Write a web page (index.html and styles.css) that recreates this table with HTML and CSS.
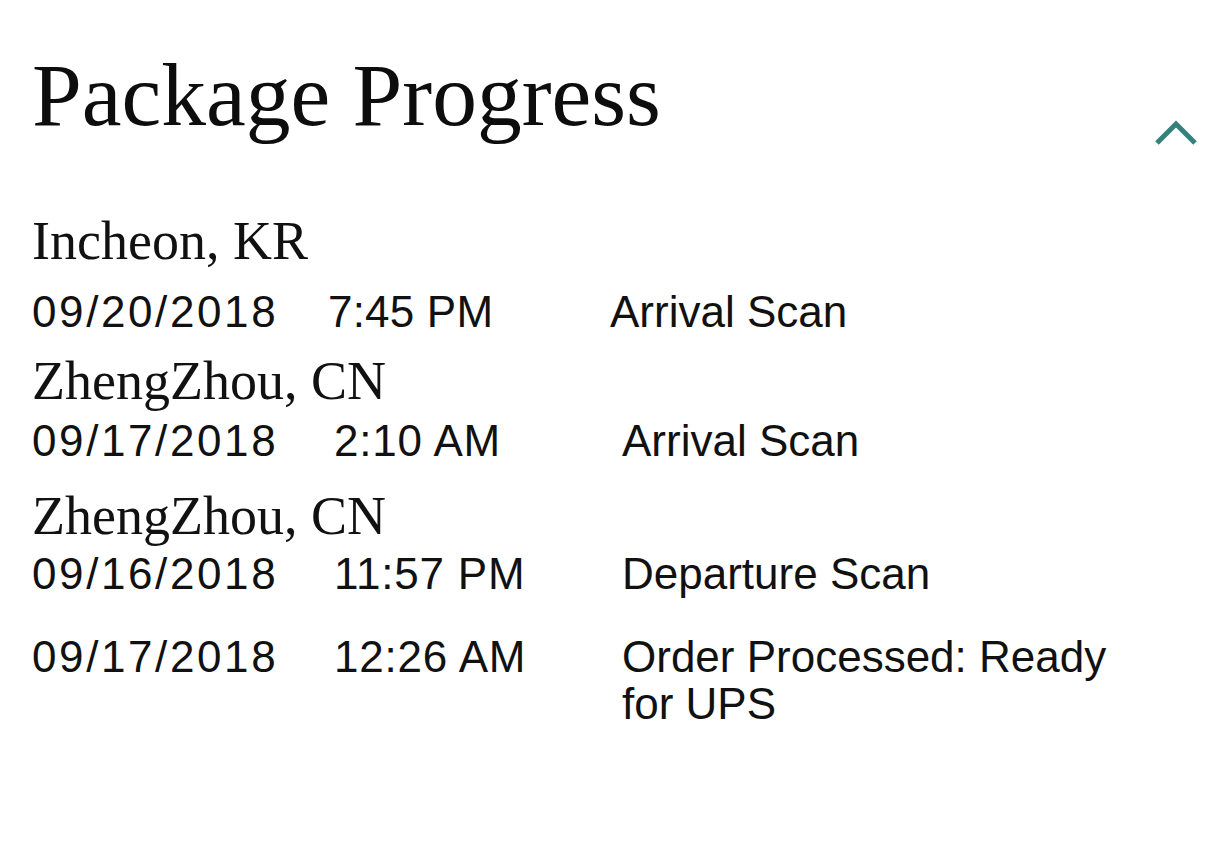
FILE: index.html
```html
<!DOCTYPE html>
<html lang="en">
<head>
<meta charset="utf-8">
<title>Package Progress</title>
<link rel="stylesheet" href="styles.css">
</head>
<body>
<main class="page">
  <header class="header">
    <h1 class="title">Package Progress</h1>
    <button class="toggle" aria-label="Collapse">
      <svg width="44" height="28" viewBox="0 0 44 28" aria-hidden="true">
        <polyline points="3,24 22,5 41,24" fill="none" stroke="#34827b" stroke-width="5"/>
      </svg>
    </button>
  </header>

  <section class="group group--first">
    <div class="location">Incheon, KR</div>
    <div class="row">
      <span class="date">09/20/2018</span>
      <span class="time">7:45 PM</span>
      <span class="desc">Arrival Scan</span>
    </div>
  </section>

  <section class="group">
    <div class="location">ZhengZhou, CN</div>
    <div class="row">
      <span class="date">09/17/2018</span>
      <span class="time">2:10 AM</span>
      <span class="desc">Arrival Scan</span>
    </div>
  </section>

  <section class="group">
    <div class="location">ZhengZhou, CN</div>
    <div class="row">
      <span class="date">09/16/2018</span>
      <span class="time">11:57 PM</span>
      <span class="desc">Departure Scan</span>
    </div>
    <div class="row row--next">
      <span class="date">09/17/2018</span>
      <span class="time">12:26 AM</span>
      <span class="desc">Order Processed: Ready for UPS</span>
    </div>
  </section>
</main>
</body>
</html>
```

FILE: styles.css
```css
html, body {
  margin: 0;
  padding: 0;
  background: #ffffff;
}

.page {
  padding: 45px 11px 80px 32px;
  color: #111111;
}

.header {
  display: flex;
  justify-content: space-between;
  align-items: flex-start;
  height: 100px;
}

.title {
  margin: 0;
  font-family: "Liberation Serif", "Times New Roman", serif;
  font-weight: normal;
  font-size: 89.5px;
  line-height: 100px;
  color: #0d0d0d;
}

.toggle {
  margin-top: 74px;
  padding: 0;
  border: 0;
  background: none;
  width: 44px;
  height: 28px;
}

.toggle svg {
  display: block;
}

.group {
  margin-top: 16px;
}

.group--first {
  margin-top: 66px;
}

.location {
  font-family: "Liberation Serif", "Times New Roman", serif;
  font-size: 54px;
  line-height: 60px;
}

.row {
  display: grid;
  grid-template-columns: 302px 288px 510px;
  margin-top: 6px;
  font-family: "Liberation Sans", Arial, sans-serif;
  font-size: 44px;
  line-height: 47px;
}

.date {
  letter-spacing: 2.6px;
}

.time {
  letter-spacing: 0.8px;
}

.group--first .row {
  grid-template-columns: 296px 282px 510px;
  margin-top: 17px;
}

.group--first .time {
  letter-spacing: 0.2px;
}

.group + .group {
  margin-top: 16px;
}

.group + .group + .group {
  margin-top: 22px;
}

.group + .group + .group .row {
  margin-top: 4px;
}

.group + .group + .group .row--next {
  margin-top: 36px;
}
```
